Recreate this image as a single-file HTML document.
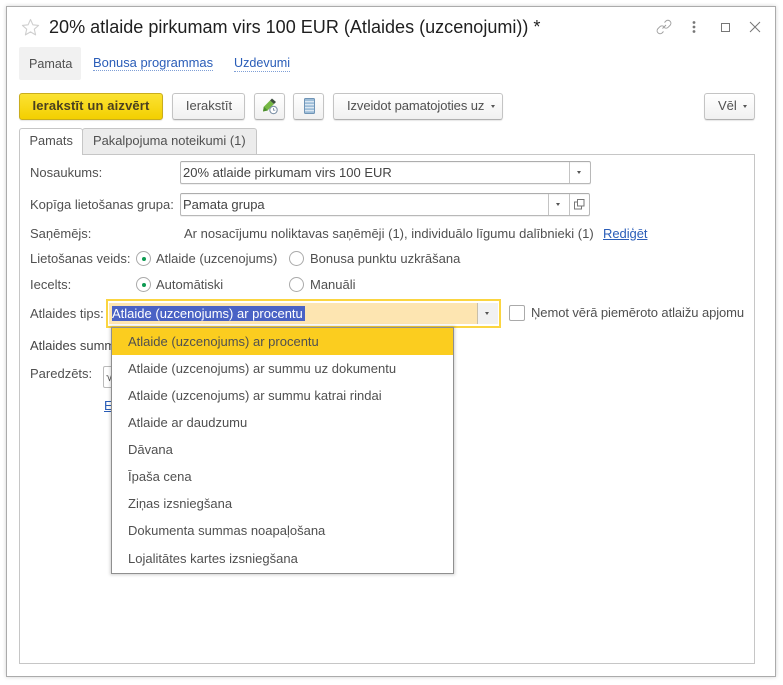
<!DOCTYPE html>
<html>
<head>
<meta charset="utf-8">
<style>
*{box-sizing:border-box}
html,body{margin:0;padding:0;background:#fff}
body{width:783px;height:685px;position:relative;overflow:hidden;font-family:"Liberation Sans",Arial,sans-serif;font-size:13px;color:#505050;filter:blur(.35px)}
.a{position:absolute;white-space:nowrap}
.t{position:absolute;white-space:nowrap;line-height:16px}
.btn{position:absolute;height:27px;top:92.5px;border:1px solid #c4c4c4;border-bottom-color:#b0b0b0;border-radius:3px;background:linear-gradient(#fff,#f0f0f0);box-shadow:0 1px 1px rgba(0,0,0,.1);text-align:center;line-height:24px;color:#505050}
.field{position:absolute;background:#fff;border:1px solid #b8b8b8;border-top-color:#adadad;border-radius:2px;box-shadow:inset 0 1px 1px rgba(0,0,0,.05),0 1px 0 rgba(0,0,0,.06)}
.arr{position:absolute;width:0;height:0;border-left:2.5px solid transparent;border-right:2.5px solid transparent;border-top:3px solid #555}
.radio{position:absolute;width:15px;height:15px;border:1px solid #aaa;border-radius:50%;background:#fff}
.radio.on::after{content:"";position:absolute;left:4.5px;top:4.5px;width:4px;height:4px;border-radius:50%;background:#0d9a52}
.item{position:absolute;left:128px;white-space:nowrap;line-height:16px;color:#505050}
</style>
</head>
<body>
<!-- window -->
<div class="a" style="left:6px;top:6px;width:770px;height:671px;background:#fff;border:1px solid #ababab;box-shadow:0 0 4px rgba(0,0,0,.18)"></div>

<!-- title -->
<svg class="a" style="left:21px;top:18px" width="19" height="19" viewBox="0 0 19 19"><path d="M9.5 1.5l2.4 5.3 5.7.6-4.3 3.8 1.3 5.7-5.1-3-5.1 3 1.3-5.7L1.4 7.4l5.7-.6z" fill="none" stroke="#cfcfcf" stroke-width="1.1" stroke-linejoin="round"/></svg>
<div class="a" style="left:49px;top:15px;font-size:18.06px;line-height:24px;color:#1f1f1f">20% atlaide pirkumam virs 100 EUR (Atlaides (uzcenojumi)) *</div>
<svg class="a" style="left:655px;top:18px" width="18" height="18" viewBox="0 0 18 18" fill="none" stroke="#a0a0a0" stroke-width="1"><path d="M7.5 10.5l3.5-3.5M9.5 4.5l1.6-1.6a3 3 0 0 1 4.2 4.2l-2.2 2.2a3 3 0 0 1-4.1.1"/><path d="M8.5 13.5l-1.6 1.6a3 3 0 0 1-4.2-4.2l2.2-2.2a3 3 0 0 1 4.1-.1"/></svg>
<svg class="a" style="left:691px;top:20px" width="6" height="14" viewBox="0 0 6 14" fill="#777"><circle cx="3" cy="2.5" r="1.4"/><circle cx="3" cy="7" r="1.4"/><circle cx="3" cy="11.5" r="1.4"/></svg>
<div class="a" style="left:721px;top:23px;width:9px;height:9px;border:1px solid #777"></div>
<svg class="a" style="left:749px;top:21px" width="12" height="12" viewBox="0 0 12 12" stroke="#777" stroke-width="1"><path d="M1 1l10 10M11 1L1 11"/></svg>

<!-- nav -->
<div class="a" style="left:19px;top:47px;width:62px;height:33px;background:#f1f1f1;border-radius:2px"></div>
<div class="t" style="left:29px;top:56px;font-size:12.6px">Pamata</div>
<div class="t" style="left:93px;top:55px;font-size:12.95px;color:#2a5db8;border-bottom:1px dotted #7f9fd6;line-height:15px">Bonusa programmas</div>
<div class="t" style="left:234px;top:55px;font-size:12.6px;color:#2a5db8;border-bottom:1px dotted #7f9fd6;line-height:15px;padding-top:1px">Uzdevumi</div>

<!-- toolbar -->
<div class="btn" style="left:19px;width:144px;background:linear-gradient(#fbe233,#f3cf00);border-color:#c9ad1e;font-weight:bold;color:#4a4020;letter-spacing:.14px">Ierakstīt un aizvērt</div>
<div class="btn" style="left:172px;width:73px;padding-left:1px">Ierakstīt</div>
<div class="btn" style="left:254px;width:31px"></div>
<svg class="a" style="left:260px;top:96px" width="20" height="20" viewBox="0 0 20 20"><path d="M3 15.5l.8-4.8 6.2-6.2 4 3.5-6 6z" fill="#74b743"/><path d="M10 4.5L12 2.5l4 3.5-2 2z" fill="#3c4f3c"/><path d="M3 15.5l.8-4.8 4.2 3.8z" fill="#4c8f2c"/><circle cx="13.5" cy="14" r="3.7" fill="#fff" stroke="#7d92a8" stroke-width="1.1"/><path d="M13.5 12v2.2h1.8" fill="none" stroke="#7d92a8" stroke-width=".9"/></svg>
<div class="btn" style="left:293px;width:31px"></div>
<svg class="a" style="left:304px;top:98px" width="11" height="16" viewBox="0 0 11 16"><rect x=".5" y=".5" width="10" height="15" rx="1" fill="#9dbdd8" stroke="#6f94b6"/><path d="M1 3.7h9M1 6.7h9M1 9.7h9M1 12.7h9" stroke="#e4edf5" stroke-width="1.1"/></svg>
<div class="btn" style="left:333px;width:170px;text-align:left;padding-left:13px;letter-spacing:-.09px">Izveidot pamatojoties uz</div>
<div class="arr" style="left:491px;top:105px"></div>
<div class="btn" style="left:704px;width:51px;text-align:left;padding-left:13px">Vēl</div>
<div class="arr" style="left:743px;top:105px"></div>

<!-- tabs panel -->
<div class="a" style="left:19px;top:154px;width:736px;height:510px;border:1px solid #c6c6c6;background:#fff"></div>
<div class="a" style="left:82px;top:128px;width:175px;height:26px;background:#ececec;border:1px solid #c6c6c6;border-bottom:none;border-radius:3px 3px 0 0"></div>
<div class="a" style="left:19px;top:128px;width:64px;height:27px;background:#fff;border:1px solid #c6c6c6;border-bottom:none;border-radius:3px 3px 0 0"></div>
<div class="t" style="left:29.5px;top:133px;font-size:12.8px">Pamats</div>
<div class="t" style="left:93px;top:133px;font-size:12.9px">Pakalpojuma noteikumi (1)</div>

<!-- Nosaukums -->
<div class="t" style="left:30px;top:165px">Nosaukums:</div>
<div class="field" style="left:180px;top:161px;width:411px;height:23px"></div>
<div class="a" style="left:569px;top:162px;width:1px;height:21px;background:#c4c4c4"></div>
<div class="t" style="left:183px;top:165px;color:#444">20% atlaide pirkumam virs 100 EUR</div>
<div class="arr" style="left:577px;top:171px"></div>

<!-- Kopiga -->
<div class="t" style="left:30px;top:197px">Kopīga lietošanas grupa:</div>
<div class="field" style="left:180px;top:193px;width:410px;height:23px"></div>
<div class="a" style="left:548px;top:194px;width:1px;height:21px;background:#c4c4c4"></div>
<div class="a" style="left:569px;top:194px;width:1px;height:21px;background:#c4c4c4"></div>
<div class="t" style="left:183px;top:197px;color:#444">Pamata grupa</div>
<div class="arr" style="left:556px;top:203px"></div>
<svg class="a" style="left:574px;top:199px" width="11" height="11" viewBox="0 0 11 11" fill="none" stroke="#777" stroke-width="1"><rect x="3.5" y=".5" width="6.5" height="6.5" fill="#fff"/><path d="M3 3H.5v7h7V7.5"/></svg>

<!-- Sanemejs -->
<div class="t" style="left:30px;top:226px">Saņēmējs:</div>
<div class="t" style="left:184px;top:226px;letter-spacing:.01px">Ar nosacījumu noliktavas saņēmēji (1), individuālo līgumu dalībnieki (1)</div>
<div class="t" style="left:603px;top:226px;color:#2a5db8;text-decoration:underline;letter-spacing:-.05px">Rediģēt</div>

<!-- Lietosanas -->
<div class="t" style="left:30px;top:251px">Lietošanas veids:</div>
<div class="radio on" style="left:136px;top:251px"></div>
<div class="t" style="left:156px;top:251px">Atlaide (uzcenojums)</div>
<div class="radio" style="left:289px;top:251px"></div>
<div class="t" style="left:310px;top:251px">Bonusa punktu uzkrāšana</div>

<!-- Iecelts -->
<div class="t" style="left:30px;top:277px">Iecelts:</div>
<div class="radio on" style="left:136px;top:277px"></div>
<div class="t" style="left:156px;top:277px">Automātiski</div>
<div class="radio" style="left:289px;top:277px"></div>
<div class="t" style="left:310px;top:277px">Manuāli</div>

<!-- Atlaides tips -->
<div class="t" style="left:30px;top:306px">Atlaides tips:</div>
<div class="a" style="left:106px;top:299px;width:395px;height:29px;border:2px solid #fbd540;background:#fff"></div>
<div class="a" style="left:109px;top:303px;width:368px;height:21px;background:#fde5b1"></div>
<div class="a" style="left:477px;top:303px;width:21px;height:21px;background:#f1f1f1;border-left:1px solid #c9bfa8"></div>
<div class="arr" style="left:485px;top:312px"></div>
<div class="a" style="left:112px;top:306px;width:193px;height:15px;background:#4a62c5;color:#fff;line-height:15px">Atlaide (uzcenojums) ar procentu</div>
<div class="a" style="left:509px;top:305px;width:16px;height:16px;background:#fff;border:1px solid #aaa;border-radius:2px"></div>
<div class="t" style="left:531px;top:305px;letter-spacing:-.085px">Ņemot vērā piemēroto atlaižu apjomu</div>

<!-- behind dropdown -->
<div class="t" style="left:30px;top:338px;color:#444">Atlaides summa</div>
<div class="t" style="left:30px;top:366px">Paredzēts:</div>
<div class="a" style="left:103px;top:366px;width:20px;height:22px;background:#fff;border:1px solid #bbb;border-radius:2px;line-height:20px;padding-left:2px">√</div>
<div class="t" style="left:104px;top:398px;color:#2a5db8;text-decoration:underline">E</div>

<!-- dropdown -->
<div class="a" style="left:111px;top:327px;width:343px;height:247px;background:#fff;border:1px solid #8f8f8f;box-shadow:0 0 3px 1px rgba(0,0,0,.18)"></div>
<div class="a" style="left:112px;top:328px;width:341px;height:27px;background:#fbcd1f"></div>
<div class="item" style="top:334px">Atlaide (uzcenojums) ar procentu</div>
<div class="item" style="top:361px">Atlaide (uzcenojums) ar summu uz dokumentu</div>
<div class="item" style="top:388px">Atlaide (uzcenojums) ar summu katrai rindai</div>
<div class="item" style="top:415px">Atlaide ar daudzumu</div>
<div class="item" style="top:442px">Dāvana</div>
<div class="item" style="top:469px">Īpaša cena</div>
<div class="item" style="top:496px">Ziņas izsniegšana</div>
<div class="item" style="top:523px">Dokumenta summas noapaļošana</div>
<div class="item" style="top:551px">Lojalitātes kartes izsniegšana</div>
</body>
</html>
